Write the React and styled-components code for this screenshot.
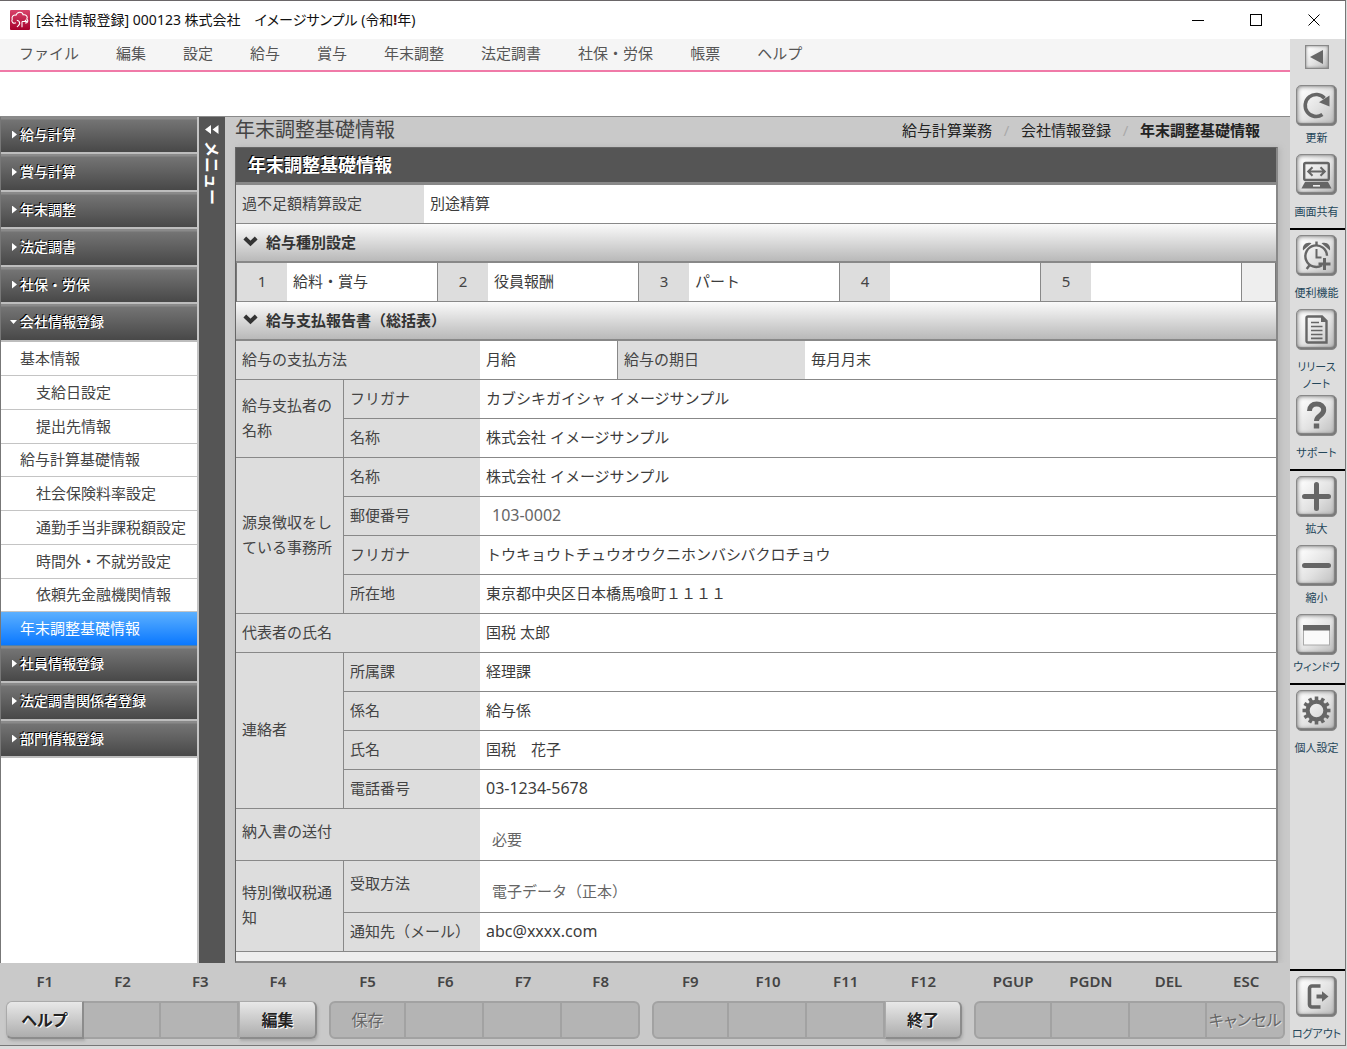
import React from "react";
import styled, { createGlobalStyle, css } from "styled-components";

const GlobalStyle = createGlobalStyle`
  *, *::before, *::after { box-sizing: border-box; }
  html, body { margin: 0; padding: 0; }
  body {
    background: #dcdcdc;
    color: #444;
    font-family: "Noto Sans", "Noto Sans CJK JP", sans-serif;
    font-size: 15px;
    line-height: 24px;
  }
  button { font: inherit; color: inherit; margin: 0; padding: 0; border: 0; background: none; cursor: pointer; }
  a { color: inherit; text-decoration: none; }
  ul, ol { list-style: none; margin: 0; padding: 0; }
  h1, h2, h3 { margin: 0; font-size: inherit; font-weight: inherit; }
`;

const Frame = styled.div`
  min-height: 100vh;
  padding-bottom: 3px;
  padding-right: 1px;
  display: flex;
  flex-direction: column;
`;
const AppWindow = styled.div`
  flex: 1;
  display: flex;
  flex-direction: column;
  border-top: 1px solid #6a6668;
  border-right: 1px solid #777;
  border-bottom: 1px solid #777;
  background: #fff;
`;

/* Title bar */
const TitleBar = styled.header`
  height: 38px;
  display: flex;
  align-items: center;
  padding: 0 2px 0 10px;
  background: #fff;
  color: #111;
`;
const AppTitle = styled.h1`
  flex: 1;
  margin-left: 6px;
  font-size: 14px;
  font-feature-settings: "palt";
  white-space: pre;
`;
const EraMark = styled.strong`
  color: #5a1010;
`;
const WindowButton = styled.button`
  width: 58px;
  height: 38px;
  display: flex;
  align-items: center;
  justify-content: center;
`;

const Body = styled.div`
  flex: 1;
  display: flex;
`;
const MainColumn = styled.div`
  flex: 1;
  min-width: 0;
  display: flex;
  flex-direction: column;
`;

/* Menu */
const MenuBar = styled.nav`
  height: 33px;
  padding: 0 19px 4px;
  display: flex;
  gap: 37px;
  align-items: center;
  background: #f5f5f5;
  border-bottom: 2px solid #f07aa8;
  color: #555;
`;
const ToolStrip = styled.div`
  height: 44px;
  background: #fff;
`;

const Workspace = styled.div`
  flex: 1;
  display: flex;
  border-top: 1px solid #8a8a8a;
  background: #c9c9c9;
`;

/* Side menu */
const SideMenu = styled.nav`
  width: 199px;
  background: #fff;
  border-left: 1px solid #777;
  border-right: 2px solid #c4c4c4;
`;
const Category = styled.li`
  &:nth-child(odd) > button { height: 37px; }
  &:nth-child(even) > button { height: 38px; }
`;
const CategoryButton = styled.button`
  width: 100%;
  padding: 0 0 0 11px;
  display: flex;
  align-items: center;
  gap: 3px;
  border-bottom: 2px solid #bdbdbd;
  background: linear-gradient(#8a8a8a 0, #8a8a8a 2px, #747474 3px, #484848 100%);
  color: #fff;
  font-size: 14px;
  font-weight: 500;
  text-shadow: -1px -1px 0 #000;
`;
const Arrow = styled.span`
  flex: none;
  width: 5px;
  height: 8px;
  background: #fff;
  clip-path: polygon(0 0, 100% 50%, 0 100%);
  ${(p) => p.$open && css`
    width: 7px;
    height: 4px;
    margin-left: -2px;
    clip-path: polygon(0 0, 100% 0, 50% 100%);
  `}
`;
const SubItem = styled.li`
  height: 34px;
  &:nth-child(4n) { height: 33px; }
`;
const SubLink = styled.a`
  height: 100%;
  display: flex;
  align-items: center;
  padding-left: ${(p) => (p.$level === 2 ? 35 : 19)}px;
  padding-bottom: 2px;
  border-bottom: 1px solid #c4c4c4;
  white-space: nowrap;
  ${(p) => p.$active && css`
    color: #fff;
    border-bottom-color: #4a80b0;
    background: linear-gradient(#5cb0ff, #0a78ff);
  `}
`;
const Collapse = styled.button`
  width: 26px;
  padding-top: 8px;
  display: flex;
  flex-direction: column;
  align-items: center;
  gap: 7px;
  background: #555;
  color: #fff;
`;
const CollapseText = styled.span`
  writing-mode: vertical-rl;
  text-orientation: sideways;
  line-height: 18px;
  font-weight: 700;
  font-size: 16px;
`;

/* Content */
const Content = styled.main`
  flex: 1;
  min-width: 0;
  padding: 0 12px 0 10px;
  display: flex;
  flex-direction: column;
`;
const ContentHead = styled.div`
  height: 30px;
  padding: 0 18px 4px 0;
  display: flex;
  align-items: center;
  justify-content: space-between;
`;
const PageTitle = styled.h2`
  font-size: 20px;
`;
const Crumbs = styled.ol`
  display: flex;
  color: #222;
`;
const Crumb = styled.li`
  font-weight: ${(p) => (p.$current ? 700 : 400)};
  &:not(:first-child)::before {
    content: "/";
    display: inline-block;
    width: 29px;
    text-align: center;
    color: #aaa;
    font-weight: 400;
  }
`;
const Panel = styled.section`
  flex: 1;
  border: 1px solid #666;
  border-right: 2px solid #888;
  border-bottom: 2px solid #888;
  background: #eee;
  box-shadow: 2px 0 6px #b4b4b4;
`;
const PanelTitle = styled.h3`
  height: 37px;
  padding: 0 12px;
  border-bottom: 3px solid #888;
  background: #555;
  color: #fff;
  font-size: 18px;
  font-weight: 700;
  line-height: 34px;
  text-shadow: -1px -1px 0 #000;
`;
const SectionButton = styled.button`
  width: 100%;
  height: 39px;
  padding: 0 7px 2px;
  display: flex;
  align-items: center;
  gap: 8px;
  border-bottom: 2px solid #888;
  background: linear-gradient(#fafafa, #b9b9b9);
  color: #333;
  font-weight: 700;
`;
const Table = styled.table`
  width: 100%;
  table-layout: fixed;
  border-collapse: separate;
  border-spacing: 0;
`;
const Col = styled.col`
  width: ${(p) => (p.$w ? p.$w + "px" : "auto")};
`;
const Row = styled.tr`
  height: ${(p) => (p.$tall ? 52 : 39)}px;
`;
const Label = styled.th`
  padding: 0 6px 2px;
  border-bottom: 1px solid #888;
  border-right: ${(p) => (p.$divided ? "1px solid #888" : "0")};
  background: #ddd;
  font-weight: 400;
  line-height: 25px;
  text-align: ${(p) => (p.$center ? "center" : "left")};
  ${(p) => p.$raised && css`
    padding-bottom: 6px;
  `}
`;
const Value = styled.td`
  padding: 0 6px 3px;
  border-bottom: 1px solid #888;
  border-right: ${(p) => (p.$divided ? "1px solid #888" : "0")};
  background: #fff;
  color: #3c3c3c;
  ${(p) => p.$field && css`
    padding-left: 12px;
    color: #666;
  `}
  ${(p) => p.$low && css`
    padding-top: 12px;
  `}
`;
const Digits = styled.span`
  font-size: 16px;
`;
const Filler = styled.td`
  border-bottom: 1px solid #888;
  background: #eee;
`;
const TypeTable = styled(Table)`
  border-left: 1px solid #777;
  border-right: 1px solid #777;
`;

/* Function keys */
const KeyBar = styled.footer`
  height: 82px;
  padding: 6px 5px 0 6px;
  display: grid;
  grid-template-columns: repeat(4, 1fr);
  gap: 12px;
  background: #c9c9c9;
`;
const KeyGroup = styled.div`
  display: grid;
  grid-template-columns: repeat(4, 1fr);
  grid-template-rows: 24px 38px;
  row-gap: 8px;
  grid-auto-flow: column;
`;
const KeyName = styled.label`
  text-align: center;
  font-weight: 600;
`;
const KeyButton = styled.button`
  min-width: 0;
  border: 2px solid #a2a2a2;
  border-left-width: ${(p) => (p.$pos === 0 ? 2 : 0)}px;
  border-radius: ${(p) => (p.$pos === 0 ? "6px 0 0 6px" : p.$pos === 3 ? "0 6px 6px 0" : "0")};
  background: #b4b4b4;
  color: #666;
  font-size: 16px;
  font-feature-settings: "palt";
  text-shadow: 1px 1px 0 #ddd;
  white-space: nowrap;
  ${(p) => p.$on && css`
    border-width: 1px 2px 2px 1px;
    border-color: #aaa #8c8c8c #8c8c8c #aaa;
    border-radius: ${p.$pos === 0 ? "6px 0 0 6px" : "0 6px 6px 0"};
    background: linear-gradient(#e8e8e8, #adadad);
    color: #222;
    font-weight: 700;
    text-shadow: 1px 1px 0 #fff;
    box-shadow: 1px 2px 3px #aaa;
  `}
`;

/* Right rail */
const Rail = styled.aside`
  width: 55px;
  padding-top: 6px;
  display: flex;
  flex-direction: column;
  align-items: stretch;
  background: #ddd;
`;
const bevel = css`
  display: flex;
  align-items: center;
  justify-content: center;
  border: 1px solid #888;
  background: linear-gradient(135deg, #fafafa 15%, #e2e2e2 55%, #bbb);
  color: #666;
`;
const RailToggle = styled.button`
  ${bevel}
  width: 24px;
  height: 24px;
  margin: 0 16px 16px 15px;
  box-shadow: inset 0 0 3px #777;
`;
const RailGroup = styled.div`
  ${(p) => p.$ruled && css`
    border-top: 2px solid #000;
    padding-top: 5px;
  `}
  ${(p) => p.$end && css`
    margin-top: auto;
  `}
`;
const Tool = styled.button`
  width: 100%;
  display: flex;
  flex-direction: column;
  align-items: center;
  gap: ${(p) => (p.$close ? 3 : 8)}px;
  padding: 0 2px ${(p) => (p.$tight ? 3 : 8)}px 0;
`;
const ToolFace = styled.span`
  ${bevel}
  width: 41px;
  height: 41px;
  border-radius: 5px;
  box-shadow: inset 0 0 5px #666, inset -1px -1px 1px 1px #8a8a8a;
`;
const ToolLabel = styled.span`
  color: #24465a;
  font-size: 11px;
  line-height: 17px;
  font-feature-settings: "palt";
  text-align: center;
  white-space: pre-line;
`;

const Svg = ({ size = 33, children }) => (
  <svg width={size} height={size} viewBox="0 0 33 33" fill="none" stroke="currentColor" strokeWidth="3" aria-hidden="true">
    {children}
  </svg>
);

const icons = {
  refresh: (
    <Svg>
      <path d="M22.4 25.6A11 11 0 1 1 24.5 9.3" strokeWidth="3.6" />
      <path d="M29.5 6.5v11L19 13.2z" fill="currentColor" stroke="none" />
    </Svg>
  ),
  share: (
    <Svg>
      <rect x="4.2" y="5" width="24.6" height="17" rx="1.5" strokeWidth="2.4" />
      <path d="M9 13.5h15M12.5 9.2 8.2 13.5l4.3 4.3M20.5 9.2l4.3 4.3-4.3 4.3" strokeWidth="2" />
      <path d="M5 24h23l3.6 6.5H1.4z" fill="currentColor" stroke="none" />
      <path d="M13 27.8h7" stroke="#eee" strokeWidth="1.6" />
    </Svg>
  ),
  clock: (
    <Svg>
      <path d="M22 26.3a10.8 10.8 0 1 1 5-9.5" strokeWidth="2.4" />
      <path d="M16.5 10v8.5h5" strokeWidth="2" />
      <path d="M3 11.5C2 6 6 2.5 11.5 4.2zM30 11.5C31 6 27 2.5 21.5 4.2z" fill="currentColor" stroke="none" />
      <path d="M16.5 2.5v4M9.7 26l-3 4" strokeWidth="2.4" />
      <path d="M24.500 19v12M18.500 25h12" strokeWidth="3" />
    </Svg>
  ),
  note: (
    <Svg>
      <path d="M8 3.5h14l4.5 4.5v21.5H8a1.5 1.5 0 0 1-1.5-1.5V5A1.5 1.5 0 0 1 8 3.5z" strokeWidth="2.4" />
      <path d="M21 3v6h6z" fill="currentColor" stroke="none" />
      <path d="M11 9.5h8M11 13.5h11.5M11 17.5h11.5M11 21.5h11.5M11 25.3h11.5" strokeWidth="1.7" />
    </Svg>
  ),
  help: (
    <Svg>
      <path d="M9.5 12c0-4.5 3-7 7.2-7s7 2.4 7 6c0 5.6-7.2 5.2-7.2 11" strokeWidth="5" />
      <rect x="13.8" y="24.5" width="5.4" height="5" fill="currentColor" stroke="none" />
    </Svg>
  ),
  plus: (
    <Svg>
      <path d="M16.5 4.5v24M4.5 16.5h24" strokeWidth="5" strokeLinecap="round" />
    </Svg>
  ),
  minus: (
    <Svg>
      <path d="M4.5 16.5h24" strokeWidth="5" strokeLinecap="round" />
    </Svg>
  ),
  pane: (
    <Svg>
      <rect x="3.5" y="8" width="26" height="19" fill="#fafafa" stroke="#aaa" strokeWidth="1" />
      <rect x="3" y="7" width="27" height="5.5" fill="currentColor" stroke="none" />
    </Svg>
  ),
  gear: (
    <Svg>
      <circle cx="16.5" cy="16.5" r="8.8" strokeWidth="4" />
      {Array.from({ length: 12 }, (_, i) => (
        <rect key={i} x="14.7" y="2.5" width="3.6" height="5" fill="currentColor" stroke="none" transform={`rotate(${i * 30} 16.5 16.5)`} />
      ))}
    </Svg>
  ),
  logout: (
    <Svg>
      <path d="M20.5 6H12a2.5 2.5 0 0 0-2.5 2.5v16A2.5 2.5 0 0 0 12 27h8.5" strokeWidth="3.6" />
      <path d="M16.5 16.5h7" strokeWidth="4" />
      <path d="M22 11.2l6.5 5.3-6.5 5.3z" fill="currentColor" stroke="none" />
    </Svg>
  ),
};

const toolGroups = [
  [
    { icon: "refresh", label: "更新", close: true },
    { icon: "share", label: "画面共有" },
  ],
  [
    { icon: "clock", label: "便利機能" },
    { icon: "note", label: "リリース\nノート", tight: true },
    { icon: "help", label: "サポート" },
  ],
  [
    { icon: "plus", label: "拡大", close: true },
    { icon: "minus", label: "縮小", close: true },
    { icon: "pane", label: "ウィンドウ", close: true },
  ],
  [{ icon: "gear", label: "個人設定" }],
  [{ icon: "logout", label: "ログアウト", tight: true }],
];

const menus = ["ファイル", "編集", "設定", "給与", "賞与", "年末調整", "法定調書", "社保・労保", "帳票", "ヘルプ"];

const categories = [
  { name: "給与計算" },
  { name: "賞与計算" },
  { name: "年末調整" },
  { name: "法定調書" },
  { name: "社保・労保" },
  {
    name: "会社情報登録",
    items: [
      ["基本情報", 1],
      ["支給日設定", 2],
      ["提出先情報", 2],
      ["給与計算基礎情報", 1],
      ["社会保険料率設定", 2],
      ["通勤手当非課税額設定", 2],
      ["時間外・不就労設定", 2],
      ["依頼先金融機関情報", 2],
      ["年末調整基礎情報", 1],
    ],
  },
  { name: "社員情報登録" },
  { name: "法定調書関係者登録" },
  { name: "部門情報登録" },
];

const keyGroups = [
  [["F1", "ヘルプ", true], ["F2"], ["F3"], ["F4", "編集", true]],
  [["F5", "保存"], ["F6"], ["F7"], ["F8"]],
  [["F9"], ["F10"], ["F11"], ["F12", "終了", true]],
  [["PGUP"], ["PGDN"], ["DEL"], ["ESC", "キャンセル"]],
];

const payTypes = ["給料・賞与", "役員報酬", "パート", "", ""];

const Logo = () => (
  <svg width="20" height="20" viewBox="0 0 20 20" fill="none" stroke="#fff" strokeWidth="1.1" aria-hidden="true">
    <defs>
      <linearGradient id="logoFill" x1="0" y1="0" x2="0" y2="1">
        <stop offset="0" stopColor="#d8436b" />
        <stop offset="1" stopColor="#a8002c" />
      </linearGradient>
    </defs>
    <rect width="20" height="20" rx="1" fill="url(#logoFill)" stroke="none" />
    <path d="M6 12.8C3.500 14 .8 12 2.200 9.200 1.300 6.500 3.800 4.600 6 5.200 7.200 1.500 12.300 1.200 13.200 4.800c3-.5 5 1.800 3.600 4.200 2 1.800.8 4.300-1.800 4" />
    <path d="M6.800 10.200c2 .3 2.900 1.500 2.900 3.200-.2 1.500-1.500 2.300-2.700 3.600M12 17.200v-5.700M12 11.500h4.500l-1.600-1.500" />
  </svg>
);

const Chevron = () => (
  <svg width="15" height="11" viewBox="0 0 15 11" fill="none" stroke="#333" strokeWidth="4" aria-hidden="true">
    <path d="M1.8 2l5.7 5.5L13.2 2" />
  </svg>
);

const Section = ({ children }) => (
  <SectionButton type="button" aria-expanded="true">
    <Chevron />
    {children}
  </SectionButton>
);

export default function App() {
  return (
    <Frame>
      <GlobalStyle />
      <AppWindow>
        <TitleBar>
          <Logo />
          <AppTitle>
            [会社情報登録] 000123 株式会社　イメージサンプル (令和<EraMark>!</EraMark>年)
          </AppTitle>
          <WindowButton type="button" aria-label="最小化">
            <svg width="12" height="12" stroke="#000" shapeRendering="crispEdges"><path d="M0 6.5h12" /></svg>
          </WindowButton>
          <WindowButton type="button" aria-label="最大化">
            <svg width="12" height="12" stroke="#000" fill="none"><rect x=".5" y=".5" width="11" height="11" /></svg>
          </WindowButton>
          <WindowButton type="button" aria-label="閉じる">
            <svg width="12" height="12" stroke="#000"><path d="M.5.5l11 11M11.5.5l-11 11" /></svg>
          </WindowButton>
        </TitleBar>

        <Body>
          <MainColumn>
            <MenuBar>
              {menus.map((m) => (
                <button type="button" key={m}>{m}</button>
              ))}
            </MenuBar>
            <ToolStrip />

            <Workspace>
              <SideMenu>
                <ul>
                  {categories.map((c) => (
                    <Category key={c.name}>
                      <CategoryButton type="button" aria-expanded={Boolean(c.items)}>
                        <Arrow $open={Boolean(c.items)} />
                        {c.name}
                      </CategoryButton>
                      {c.items && (
                        <ul>
                          {c.items.map(([name, level], i) => (
                            <SubItem key={name}>
                              <SubLink href="#" $level={level} $active={i === c.items.length - 1}>{name}</SubLink>
                            </SubItem>
                          ))}
                        </ul>
                      )}
                    </Category>
                  ))}
                </ul>
              </SideMenu>
              <Collapse type="button">
                <svg width="14" height="9" viewBox="0 0 14 9" fill="#fff" aria-hidden="true">
                  <path d="M6 0v9L0 4.5zM13.5 0v9l-6-4.5z" />
                </svg>
                <CollapseText>メニュー</CollapseText>
              </Collapse>

              <Content>
                <ContentHead>
                  <PageTitle>年末調整基礎情報</PageTitle>
                  <Crumbs>
                    <Crumb><a href="#">給与計算業務</a></Crumb>
                    <Crumb><a href="#">会社情報登録</a></Crumb>
                    <Crumb $current>年末調整基礎情報</Crumb>
                  </Crumbs>
                </ContentHead>

                <Panel>
                  <PanelTitle>年末調整基礎情報</PanelTitle>
                  <Table>
                    <colgroup><Col $w={188} /><Col /></colgroup>
                    <tbody>
                      <Row><Label>過不足額精算設定</Label><Value>別途精算</Value></Row>
                    </tbody>
                  </Table>

                  <Section>給与種別設定</Section>
                  <TypeTable>
                    <colgroup>
                      {payTypes.map((_, i) => (
                        <React.Fragment key={i}><Col $w={50} /><Col $w={151} /></React.Fragment>
                      ))}
                      <Col />
                    </colgroup>
                    <tbody>
                      <Row>
                        {payTypes.map((t, i) => (
                          <React.Fragment key={i}>
                            <Label $center>{i + 1}</Label>
                            <Value $divided>{t}</Value>
                          </React.Fragment>
                        ))}
                        <Filler />
                      </Row>
                    </tbody>
                  </TypeTable>

                  <Section>給与支払報告書（総括表）</Section>
                  <Table>
                    <colgroup><Col $w={108} /><Col $w={136} /><Col $w={138} /><Col $w={187} /><Col /></colgroup>
                    <tbody>
                      <Row>
                        <Label colSpan={2}>給与の支払方法</Label><Value $divided>月給</Value>
                        <Label>給与の期日</Label><Value>毎月月末</Value>
                      </Row>
                      <Row>
                        <Label rowSpan={2} $divided>給与支払者の名称</Label>
                        <Label>フリガナ</Label><Value colSpan={3}>カブシキガイシャ イメージサンプル</Value>
                      </Row>
                      <Row><Label>名称</Label><Value colSpan={3}>株式会社 イメージサンプル</Value></Row>
                      <Row>
                        <Label rowSpan={4} $divided>源泉徴収をしている事務所</Label>
                        <Label>名称</Label><Value colSpan={3}>株式会社 イメージサンプル</Value>
                      </Row>
                      <Row><Label>郵便番号</Label><Value colSpan={3} $field><Digits>103-0002</Digits></Value></Row>
                      <Row><Label>フリガナ</Label><Value colSpan={3}>トウキョウトチュウオウクニホンバシバクロチョウ</Value></Row>
                      <Row><Label>所在地</Label><Value colSpan={3}>東京都中央区日本橋馬喰町１１１１</Value></Row>
                      <Row><Label colSpan={2}>代表者の氏名</Label><Value colSpan={3}>国税 太郎</Value></Row>
                      <Row>
                        <Label rowSpan={4} $divided>連絡者</Label>
                        <Label>所属課</Label><Value colSpan={3}>経理課</Value>
                      </Row>
                      <Row><Label>係名</Label><Value colSpan={3}>給与係</Value></Row>
                      <Row><Label>氏名</Label><Value colSpan={3}>国税　花子</Value></Row>
                      <Row><Label>電話番号</Label><Value colSpan={3}><Digits>03-1234-5678</Digits></Value></Row>
                      <Row $tall><Label colSpan={2} $raised>納入書の送付</Label><Value colSpan={3} $field $low>必要</Value></Row>
                      <Row $tall>
                        <Label rowSpan={2} $divided>特別徴収税通知</Label>
                        <Label $raised>受取方法</Label><Value colSpan={3} $field $low>電子データ（正本）</Value>
                      </Row>
                      <Row><Label>通知先（メール）</Label><Value colSpan={3}><Digits>abc@xxxx.com</Digits></Value></Row>
                    </tbody>
                  </Table>
                </Panel>
              </Content>
            </Workspace>

            <KeyBar>
              {keyGroups.map((group, g) => (
                <KeyGroup key={g}>
                  {group.map(([key, label, on], i) => (
                    <React.Fragment key={key}>
                      <KeyName htmlFor={`key-${key}`}>{key}</KeyName>
                      <KeyButton id={`key-${key}`} type="button" disabled={!on} $on={on} $pos={i}>{label}</KeyButton>
                    </React.Fragment>
                  ))}
                </KeyGroup>
              ))}
            </KeyBar>
          </MainColumn>

          <Rail>
            <RailToggle type="button" aria-label="ツールバーを隠す">
              <svg width="14" height="14" viewBox="0 0 14 14" fill="currentColor"><path d="M13 0v14L0 7z" /></svg>
            </RailToggle>
            {toolGroups.map((group, g) => (
              <RailGroup key={g} $ruled={g > 0} $end={g === toolGroups.length - 1}>
                {group.map((t) => (
                  <Tool key={t.label} type="button" $close={t.close} $tight={t.tight}>
                    <ToolFace>{icons[t.icon]}</ToolFace>
                    <ToolLabel>{t.label}</ToolLabel>
                  </Tool>
                ))}
              </RailGroup>
            ))}
          </Rail>
        </Body>
      </AppWindow>
    </Frame>
  );
}
